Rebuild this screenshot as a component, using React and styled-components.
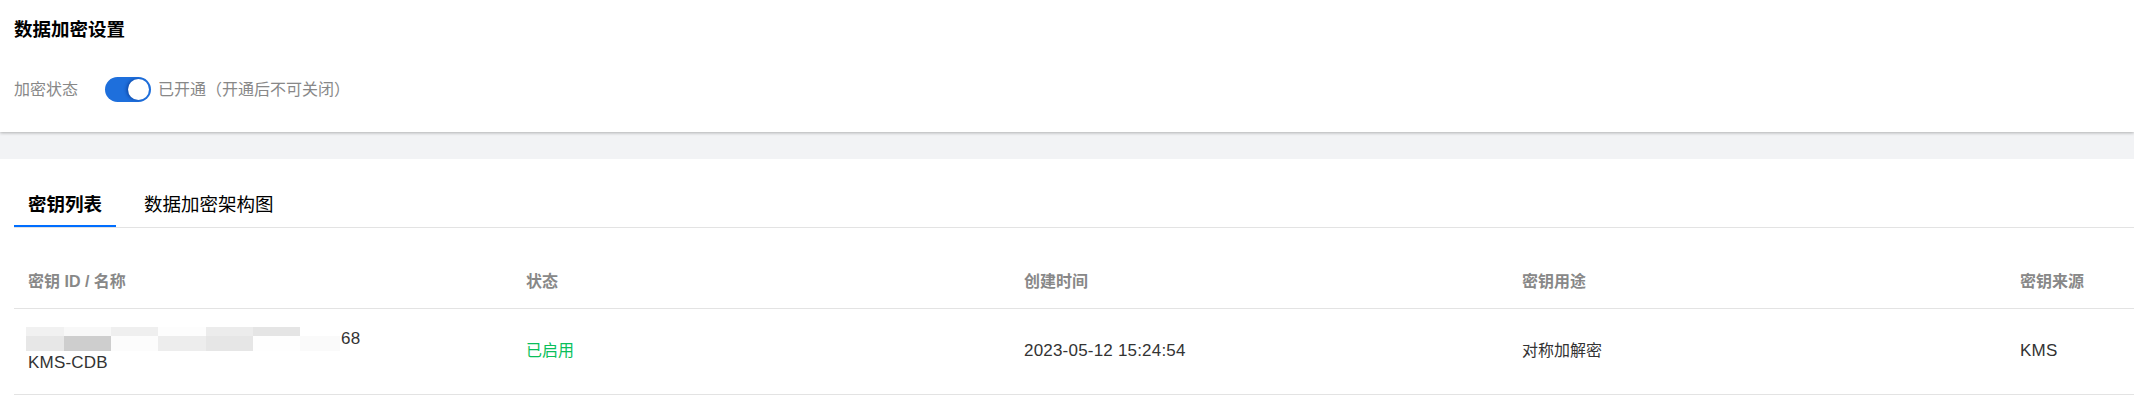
import React from "react";
import styled, { createGlobalStyle } from "styled-components";

const GlobalStyle = createGlobalStyle`
    html, body {
        margin: 0;
        padding: 0;
        background: #f2f3f5;
        overflow: hidden;
    }
    body {
        font-family: "Liberation Sans", "Noto Sans CJK SC", sans-serif;
        font-size: 16px;
        color: #333;
    }
`;

const Page = styled.div`
    min-height: 406px;
    display: flex;
    flex-direction: column;
    gap: 27px;
`;

const TopPanel = styled.section`
    background: #fff;
    padding: 17px 0 30px 14px;
    box-shadow: 0 1px 3px rgba(0, 0, 0, 0.28);
    display: flex;
    flex-direction: column;
    gap: 34px;
`;

const Title = styled.h2`
    margin: 0;
    font-size: 18.5px;
    line-height: 26px;
    font-weight: 700;
    color: #000;
`;

const FieldRow = styled.div`
    display: flex;
    align-items: center;
    height: 25px;
`;

const Label = styled.span`
    width: 91px;
    color: #888;
    line-height: 24px;
`;

const Switch = styled.span`
    position: relative;
    width: 46px;
    height: 25px;
    border-radius: 13px;
    background: ${(p) => (p.$on ? "#1e6fdc" : "#ccc")};

    &::after {
        content: "";
        position: absolute;
        top: 2px;
        left: ${(p) => (p.$on ? "23px" : "2px")};
        width: 21px;
        height: 21px;
        border-radius: 50%;
        background: #fff;
        box-shadow: -2px 0 3px rgba(0, 40, 120, 0.45);
    }
`;

const SwitchText = styled.span`
    margin-left: 7px;
    color: #888;
    line-height: 24px;
`;

const MainPanel = styled.section`
    flex: 1;
    background: #fff;
    padding: 33px 0 10px 14px;
    overflow: hidden;
`;

const Tabs = styled.div`
    display: flex;
    gap: 14px;
    border-bottom: 1px solid #e3e3e3;
`;

const Tab = styled.div`
    padding: 0 14px 7px;
    font-size: 18.5px;
    line-height: 26px;
    color: #000;
    font-weight: ${(p) => (p.$active ? 700 : 400)};
    border-bottom: 2px solid ${(p) => (p.$active ? "#006eff" : "transparent")};
`;

const Table = styled.div`
    margin-top: 28px;
    width: 2490px;
`;

const Row = styled.div`
    display: grid;
    grid-template-columns: repeat(5, 498px);
    border-bottom: 1px solid #e3e3e3;
    padding: ${(p) => (p.$head ? "14px 0" : "18px 0 19px")};
`;

const Cell = styled.div`
    padding-left: 14px;
    display: flex;
    flex-direction: column;
    justify-content: center;
    line-height: 24px;
    font-size: 16px;
    font-weight: ${(p) => (p.$head ? 600 : 400)};
    color: ${(p) => (p.$head ? "#888" : p.$tone || "#333")};
`;

const Latin = styled.span`
    font-size: 17px;
    letter-spacing: 0.2px;
`;

const IdLine = styled.div`
    display: flex;
    align-items: center;
`;

const Redacted = styled.svg`
    display: block;
    margin-left: -2px;
    margin-right: 1px;
`;

const blocks = [
    [38, "#f1f1f1", "#e7e7e7"],
    [47, "#f8f8f8", "#cecece"],
    [47, "#efefef", "#fcfcfc"],
    [48, "#fdfdfd", "#ededed"],
    [47, "#ececec", "#e6e6e6"],
    [47, "#e5e5e5", "#fefefe"],
    [40, "#ffffff", "#fafafa"],
];

function Mosaic() {
    let x = 0;
    return (
        <Redacted width="314" height="24" viewBox="0 0 314 24">
            {blocks.map(([w, top, bottom], i) => {
                const rects = (
                    <g key={i}>
                        <rect x={x} y="0" width={w} height="9" fill={top} />
                        <rect x={x} y="9" width={w} height="15" fill={bottom} />
                    </g>
                );
                x += w;
                return rects;
            })}
        </Redacted>
    );
}

const columns = ["密钥 ID / 名称", "状态", "创建时间", "密钥用途", "密钥来源"];

export default function App() {
    return (
        <>
            <GlobalStyle />
            <Page>
                <TopPanel>
                    <Title>数据加密设置</Title>
                    <FieldRow>
                        <Label>加密状态</Label>
                        <Switch $on />
                        <SwitchText>已开通（开通后不可关闭）</SwitchText>
                    </FieldRow>
                </TopPanel>
                <MainPanel>
                    <Tabs>
                        <Tab $active>密钥列表</Tab>
                        <Tab>数据加密架构图</Tab>
                    </Tabs>
                    <Table>
                        <Row $head>
                            {columns.map((c) => (
                                <Cell $head key={c}>{c}</Cell>
                            ))}
                        </Row>
                        <Row>
                            <Cell>
                                <IdLine>
                                    <Mosaic />
                                    <Latin>68</Latin>
                                </IdLine>
                                <Latin>KMS-CDB</Latin>
                            </Cell>
                            <Cell $tone="#0abf5b">已启用</Cell>
                            <Cell>
                                <Latin>2023-05-12 15:24:54</Latin>
                            </Cell>
                            <Cell>对称加解密</Cell>
                            <Cell>
                                <Latin>KMS</Latin>
                            </Cell>
                        </Row>
                    </Table>
                </MainPanel>
            </Page>
        </>
    );
}
